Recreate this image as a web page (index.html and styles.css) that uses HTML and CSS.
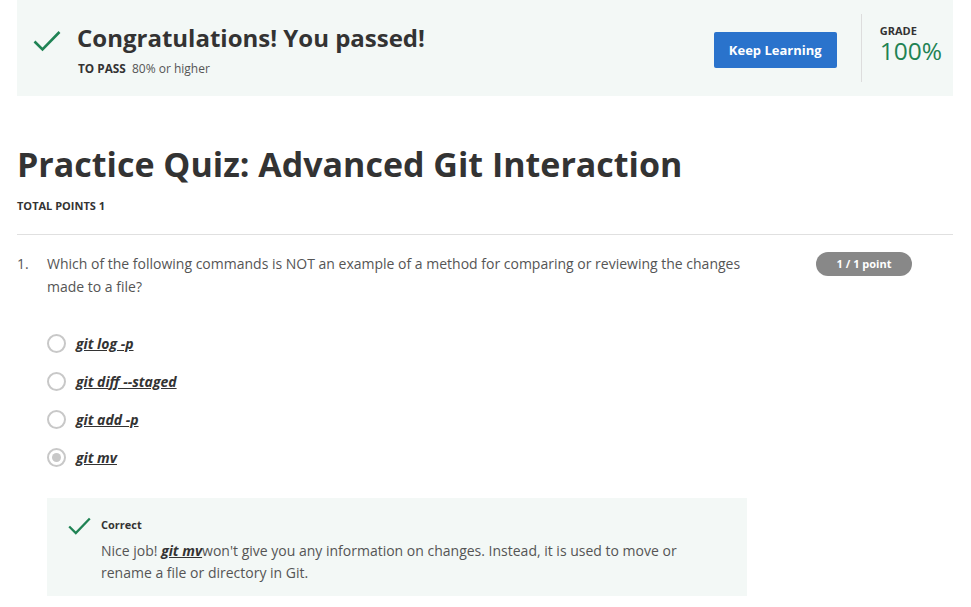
FILE: index.html
```html
<!DOCTYPE html>
<html>
<head>
<meta charset="utf-8">
<link rel="stylesheet" href="styles.css">
</head>
<body>
<div class="page">
  <div class="banner">
    <div class="banner-left">
      <svg class="check-lg" width="28" height="22" viewBox="0 0 28 22"><path d="M1.5 11.5 L9.5 19.5 L26.5 2" fill="none" stroke="#1f8354" stroke-width="2.6"/></svg>
      <div class="banner-text">
        <div class="congrats">Congratulations! You passed!</div>
        <div class="topass"><span class="lbl">TO PASS</span> 80% or higher</div>
      </div>
    </div>
    <div class="banner-right">
      <button class="keep">Keep Learning</button>
      <div class="vdiv"></div>
      <div class="grade">
        <div class="lbl">GRADE</div>
        <div class="pct">100%</div>
      </div>
    </div>
  </div>

  <h1 class="title">Practice Quiz: Advanced Git Interaction</h1>
  <div class="total">TOTAL POINTS 1</div>
  <hr class="rule">

  <div class="question">
    <div class="qnum">1.</div>
    <div class="qbody">
      <div class="qhead">
        <p class="qtext">Which of the following commands is NOT an example of a method for comparing or reviewing the changes made to a file?</p>
        <span class="badge">1 / 1 point</span>
      </div>
      <ul class="options">
        <li><span class="radio"></span><span class="opt">git log -p</span></li>
        <li><span class="radio"></span><span class="opt">git diff --staged</span></li>
        <li><span class="radio"></span><span class="opt">git add -p</span></li>
        <li><span class="radio checked"></span><span class="opt">git mv</span></li>
      </ul>
      <div class="feedback">
        <svg class="check-sm" width="23" height="18" viewBox="0 0 23 18"><path d="M1.2 9.5 L7.8 16 L21.8 1.5" fill="none" stroke="#1f8354" stroke-width="2.3"/></svg>
        <div class="fb-body">
          <div class="fb-title">Correct</div>
          <p class="fb-text">Nice job! <span class="opt">git mv</span>won't give you any information on changes. Instead, it is used to move or rename a file or directory in Git.</p>
        </div>
      </div>
    </div>
  </div>
</div>
</body>
</html>
```

FILE: styles.css
```css
* { box-sizing: border-box; }
html, body { margin: 0; padding: 0; background: #fff; }
body { font-family: "Open Sans", "Noto Sans", sans-serif; color: #333; }

.page { padding: 0 18px 0 17px; }

.banner {
  background: #f3f8f6;
  height: 96px;
  display: flex;
  justify-content: space-between;
  align-items: flex-start;
  padding: 0 11px 0 16px;
}
.banner-left { display: flex; align-items: flex-start; padding-top: 22px; }
.check-lg { margin-top: 8px; margin-right: 16px; }
.congrats { font-size: 24px; font-weight: 700; color: #333; line-height: 32px; }
.topass { font-size: 12px; color: #555; margin-top: 5px; margin-left: 1px; line-height: 18px; }
.topass .lbl { font-weight: 700; color: #333; margin-right: 3px; font-size: 11.8px; }

.banner-right { display: flex; align-items: flex-start; height: 96px; }
.keep {
  margin-top: 32px;
  width: 123px; height: 36px;
  background: #2a73cc; color: #fff; border: 0; border-radius: 2px;
  font-family: "Open Sans", sans-serif; font-weight: 700; font-size: 13px;
}
.vdiv { width: 1px; background: #ddd; height: 68px; margin: 14px 18px 0 24px; }
.grade { padding-top: 23px; }
.grade .lbl { font-size: 11px; font-weight: 700; color: #333; line-height: 15px; }
.grade .pct { font-size: 24.5px; color: #1f8354; line-height: 26px; font-weight: 400; }

.title { font-size: 34px; font-weight: 700; color: #333; margin: 45px 0 0 0; line-height: 46px; }
.total { font-size: 11px; font-weight: 700; color: #333; margin-top: 11px; }
.rule { border: 0; border-top: 1px solid #e0e0e0; margin: 21px 0 0 0; }

.question { display: flex; margin-top: 17px; font-size: 14px; color: #555; }
.qnum { width: 30px; line-height: 23px; }
.qbody { flex: 0 0 700px; }
.qhead { display: flex; justify-content: space-between; align-items: flex-start; width: 865px; }
.qtext { margin: 0; width: 700px; line-height: 23px; }
.badge {
  background: #888; color: #fff; font-size: 11px; font-weight: 700;
  border-radius: 12px; height: 24px; line-height: 24px; width: 96px; text-align: center;
  margin-top: 0;
}

.options { list-style: none; margin: 26px 0 0 0; padding: 0; }
.options li { display: flex; align-items: center; height: 38px; }
.radio {
  width: 19px; height: 19px; border: 2px solid #c8c8c8; border-radius: 50%;
  margin-right: 10px; position: relative; flex: none;
}
.radio.checked::after {
  content: ""; position: absolute; left: 3px; top: 3px; width: 9px; height: 9px; border-radius: 50%; background: #c8c8c8;
}
.opt { font-weight: 700; font-style: italic; text-decoration: underline; color: #333; font-size: 14px; }

.feedback {
  background: #f3f8f6; margin-top: 22px; width: 700px; height: 98px;
  display: flex; padding: 19px 0 0 21px;
}
.check-sm { margin-right: 10px; flex: none; }
.fb-title { font-size: 11px; font-weight: 700; color: #333; line-height: 16px; }
.fb-text { margin: 7px 0 0 0; line-height: 22px; width: 590px; color: #555; }
```
